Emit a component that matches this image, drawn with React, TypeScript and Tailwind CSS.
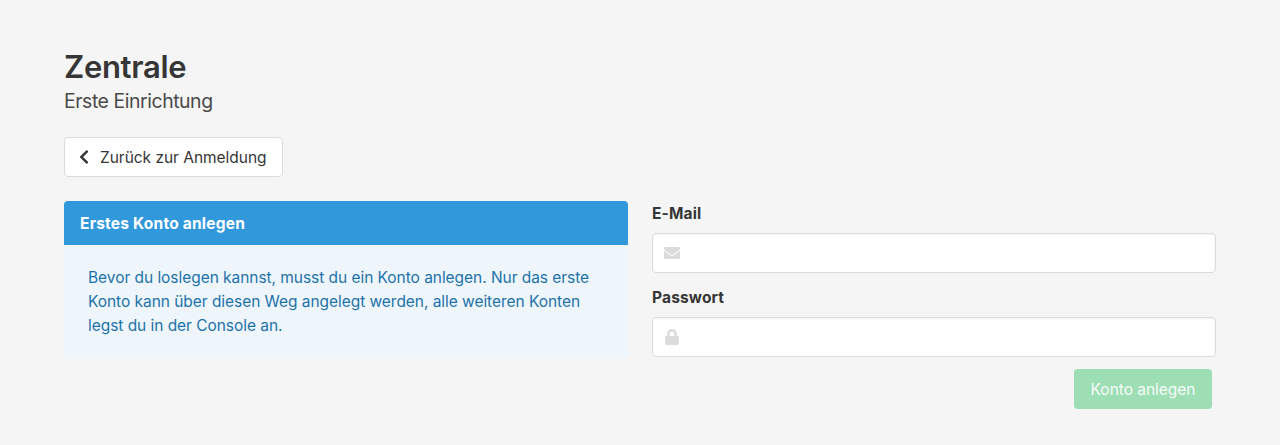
import React from "react";
import { FaChevronLeft, FaEnvelope, FaLock } from "react-icons/fa";

function Field({ label, icon, type }: { label: string; icon: React.ReactNode; type: string }) {
  return (
    <div>
      <label className="mb-[7px] block pt-px leading-6 font-bold tracking-[0.15px] text-[#363636]">{label}</label>
      <div className="relative">
        <input type={type} className="block h-10 w-full rounded border border-[#dbdbdb] bg-white pl-10 shadow-[inset_0_1px_2px_rgba(10,10,10,0.05)] outline-none" />
        <span className="absolute top-0 left-0 flex h-10 w-10 items-center justify-center text-[#dbdbdb]">{icon}</span>
      </div>
    </div>
  );
}

export default function App() {
  return (
    <main className="min-h-[445px] bg-[#f5f5f5] px-16 pt-12 font-['Inter',sans-serif] text-[15.5px] text-[#4a4a4a]">
      <h1 className="text-[31px] leading-[38px] font-semibold tracking-[-0.3px] text-[#363636]">Zentrale</h1>
      <h2 className="mt-[3px] text-[19.4px] leading-[25px] tracking-[-0.43px]">Erste Einrichtung</h2>
      <button className="mt-[23px] flex h-10 w-[219px] items-center rounded border border-[#dbdbdb] bg-white pl-[11px] text-[#363636]">
        <span className="mr-1 flex w-5 justify-center pr-1"><FaChevronLeft size={16} /></span>
        <span className="pt-0.5 whitespace-nowrap tracking-[-0.03px]">Zurück zur Anmeldung</span>
      </button>
      <div className="mt-6 grid grid-cols-2 items-start gap-6">
        <article className="overflow-hidden rounded bg-[#eef6fc]">
          <div className="bg-[#3298dc] px-4 pt-[11px] pb-[9px] leading-6 font-bold tracking-[0.22px] text-white">Erstes Konto anlegen</div>
          <div className="px-6 pt-[21px] pb-[19px] leading-6 tracking-[-0.045px] text-[#1d72aa]">
            <p className="whitespace-nowrap">Bevor du loslegen kannst, musst du ein Konto anlegen. Nur das erste<br />Konto kann über diesen Weg angelegt werden, alle weiteren Konten<br />legst du in der Console an.</p>
          </div>
        </article>
        <form>
          <div className="flex flex-col gap-3">
            <Field label="E-Mail" type="email" icon={<FaEnvelope size={16} />} />
            <Field label="Passwort" type="password" icon={<FaLock size={16} />} />
          </div>
          <div className="mt-3 flex justify-end pr-1">
            <button type="button" disabled className="h-10 w-[138px] rounded bg-[#9edeb4] pt-0.5 whitespace-nowrap tracking-[-0.03px] text-[#f5fcf7]">Konto anlegen</button>
          </div>
        </form>
      </div>
    </main>
  );
}
